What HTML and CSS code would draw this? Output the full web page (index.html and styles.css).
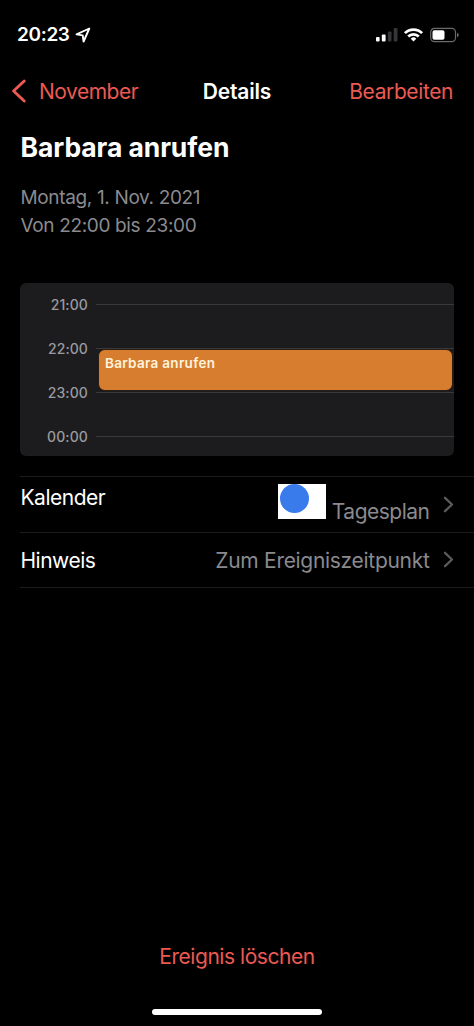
FILE: index.html
```html
<!DOCTYPE html>
<html lang="de">
<head>
<meta charset="utf-8">
<title>Details</title>
<link rel="stylesheet" href="styles.css">
</head>
<body>
<div class="screen">
  <header class="status">
    <span class="clock">20:23</span>
    <svg class="location" width="16" height="16" viewBox="0 0 16 16"><path d="M14.3 1.5 1.5 7.4l6.2 1 .9 6.1z" fill="none" stroke="#fff" stroke-width="1.9" stroke-linejoin="round"/></svg>
    <svg class="signals" width="86" height="18" viewBox="0 0 86 18">
      <g fill="#fff"><rect x="1" y="11" width="3.6" height="4.5" rx="1"/><rect x="6.8" y="8.5" width="3.8" height="7" rx="1"/></g>
      <g fill="#363638"><rect x="12.9" y="5.5" width="3.6" height="10" rx="1"/><rect x="18.7" y="2" width="3.8" height="13.5" rx="1"/></g>
      <g fill="none" stroke="#fff" stroke-width="2.7"><path d="M29.9 7.1a12.2 12.2 0 0 1 17.2 0"/><path d="M33.2 10.5a7.5 7.5 0 0 1 10.6 0"/></g>
      <path d="M38.5 15.6l-2.8-2.9a4 4 0 0 1 5.6 0z" fill="#fff"/>
      <rect x="55.7" y="2.4" width="24.8" height="13.2" rx="3.8" fill="none" stroke="#6a6a6c" stroke-width="1.2"/>
      <rect x="57.5" y="4.2" width="12" height="9.6" rx="1.8" fill="#fff"/>
      <path d="M82 6.7q1.8.7 1.8 2.3T82 11.3z" fill="#6a6a6c"/>
    </svg>
  </header>
  <nav class="nav">
    <a class="back"><svg width="15" height="24" viewBox="0 0 15 24"><path d="M13.2 2 2.6 12l10.6 10" fill="none" stroke="currentColor" stroke-width="2.9" stroke-linecap="round" stroke-linejoin="round"/></svg><span class="back-label">November</span></a>
    <h1 class="nav-title">Details</h1>
    <a class="edit">Bearbeiten</a>
  </nav>
  <main class="content">
    <h2 class="title">Barbara anrufen</h2>
    <p class="date">Montag, 1. Nov. 2021</p>
    <p class="date hours">Von 22:00 bis 23:00</p>
    <section class="timeline">
      <div class="hour"><span class="time">21:00</span><i class="rule"></i></div>
      <div class="hour"><span class="time">22:00</span><i class="rule"></i></div>
      <div class="hour"><span class="time">23:00</span><i class="rule"></i></div>
      <div class="hour"><span class="time">00:00</span><i class="rule"></i></div>
      <div class="event">Barbara anrufen</div>
    </section>
  </main>
  <section class="rows">
    <div class="row calendar-row">
      <span class="label">Kalender</span>
      <span class="swatch"><i class="dot"></i></span>
      <span class="value calendar-name">Tagesplan</span>
      <svg class="chevron" width="11" height="17" viewBox="0 0 11 17"><path d="M2 1.8 9 8.5l-7 6.7" fill="none" stroke="#5b5b5e" stroke-width="2.3" stroke-linecap="round" stroke-linejoin="round"/></svg>
    </div>
    <div class="row">
      <span class="label">Hinweis</span>
      <span class="value alert-time">Zum Ereigniszeitpunkt</span>
      <svg class="chevron" width="11" height="17" viewBox="0 0 11 17"><path d="M2 1.8 9 8.5l-7 6.7" fill="none" stroke="#5b5b5e" stroke-width="2.3" stroke-linecap="round" stroke-linejoin="round"/></svg>
    </div>
  </section>
  <footer class="footer">
    <a class="delete">Ereignis löschen</a>
    <div class="home"></div>
  </footer>
</div>
</body>
</html>
```
FILE: styles.css
```css
* { box-sizing: border-box; }
body { margin: 0; background: #000; color: #fff; font-family: Inter, "Liberation Sans", sans-serif; }
h1, h2, p { margin: 0; }
.screen { width: 474px; height: 1026px; display: flex; flex-direction: column; overflow: hidden; white-space: nowrap; background: #000; }

.status { height: 69px; padding: 0 13px 0 17px; display: flex; align-items: center; }
.clock { font-size: 19px; font-weight: 600; line-height: 24px; letter-spacing: -0.35px; }
.location { margin-left: 5px; }
.signals { margin-left: auto; }

.nav { height: 44px; padding: 0 21px 0 11px; display: grid; grid-template-columns: 1fr auto 1fr; align-items: center; font-size: 21px; line-height: 28px; }
.back, .edit { color: #eb5a52; letter-spacing: -0.5px; }
.back { display: flex; align-items: center; }
.back-label { margin-left: 13px; padding-top: 1px; }
.nav-title { padding: 1px 0 0 10px; font-size: 21px; font-weight: 600; letter-spacing: -0.2px; }
.edit { justify-self: end; padding-top: 1px; letter-spacing: -0.4px; }

.content { padding: 18px 20px 0; }
.title { padding-left: 0.5px; font-size: 26.5px; font-weight: 700; line-height: 32px; letter-spacing: -0.08px; }
.date { margin-top: 21px; padding-left: 0.5px; font-size: 19px; line-height: 28px; letter-spacing: -0.35px; color: #8b8b8f; }
.hours { margin-top: 0; }

.timeline { position: relative; height: 173px; margin-top: 43px; border-radius: 6px; background: #1c1c1e; overflow: hidden; display: grid; grid-template-rows: repeat(4, 44.2px); align-content: start; }
.hour { height: 42px; display: flex; align-items: center; }
.time { width: 68px; text-align: right; font-size: 14px; font-weight: 500; color: #9a9a9e; letter-spacing: 0.1px; }
.rule { flex: 1; height: 1px; margin-left: 8px; background: #39393b; }
.event { position: absolute; left: 77.5px; right: 1px; top: 65.5px; height: 42px; padding: 5px 6.5px; border: 1px solid #2b1c12; border-radius: 7px; background: #d77d30; color: #fff4dc; font-size: 13.5px; font-weight: 600; line-height: 17px; letter-spacing: 0.3px; }

.rows { margin: 20px 0 0 20px; border-top: 1px solid #1b1b1d; }
.row { height: 55.5px; padding: 0 20.5px 0 0.5px; display: flex; align-items: center; border-bottom: 1px solid #1b1b1d; font-size: 21px; line-height: 28px; }
.label { margin-right: auto; padding-top: 2px; letter-spacing: -0.5px; }
.value { padding-top: 2px; color: #8a8a8e; }
.chevron { margin-left: 13px; }
.calendar-row .label { margin-bottom: 14px; }
.calendar-name { margin: 13px 0 0 5.5px; letter-spacing: -0.5px; }
.alert-time { letter-spacing: -0.3px; }
.swatch { width: 48px; height: 35px; margin-bottom: 5px; padding: 0 2px; background: #fff; }
.dot { display: block; width: 29px; height: 29px; border-radius: 50%; background: #397bea; }

.footer { margin-top: auto; height: 84px; display: flex; flex-direction: column; align-items: center; }
.delete { padding-top: 1px; color: #eb5a52; font-size: 21px; line-height: 28px; letter-spacing: -0.45px; }
.home { width: 170px; height: 6px; margin-top: 38px; border-radius: 3px; background: #fff; }
```
